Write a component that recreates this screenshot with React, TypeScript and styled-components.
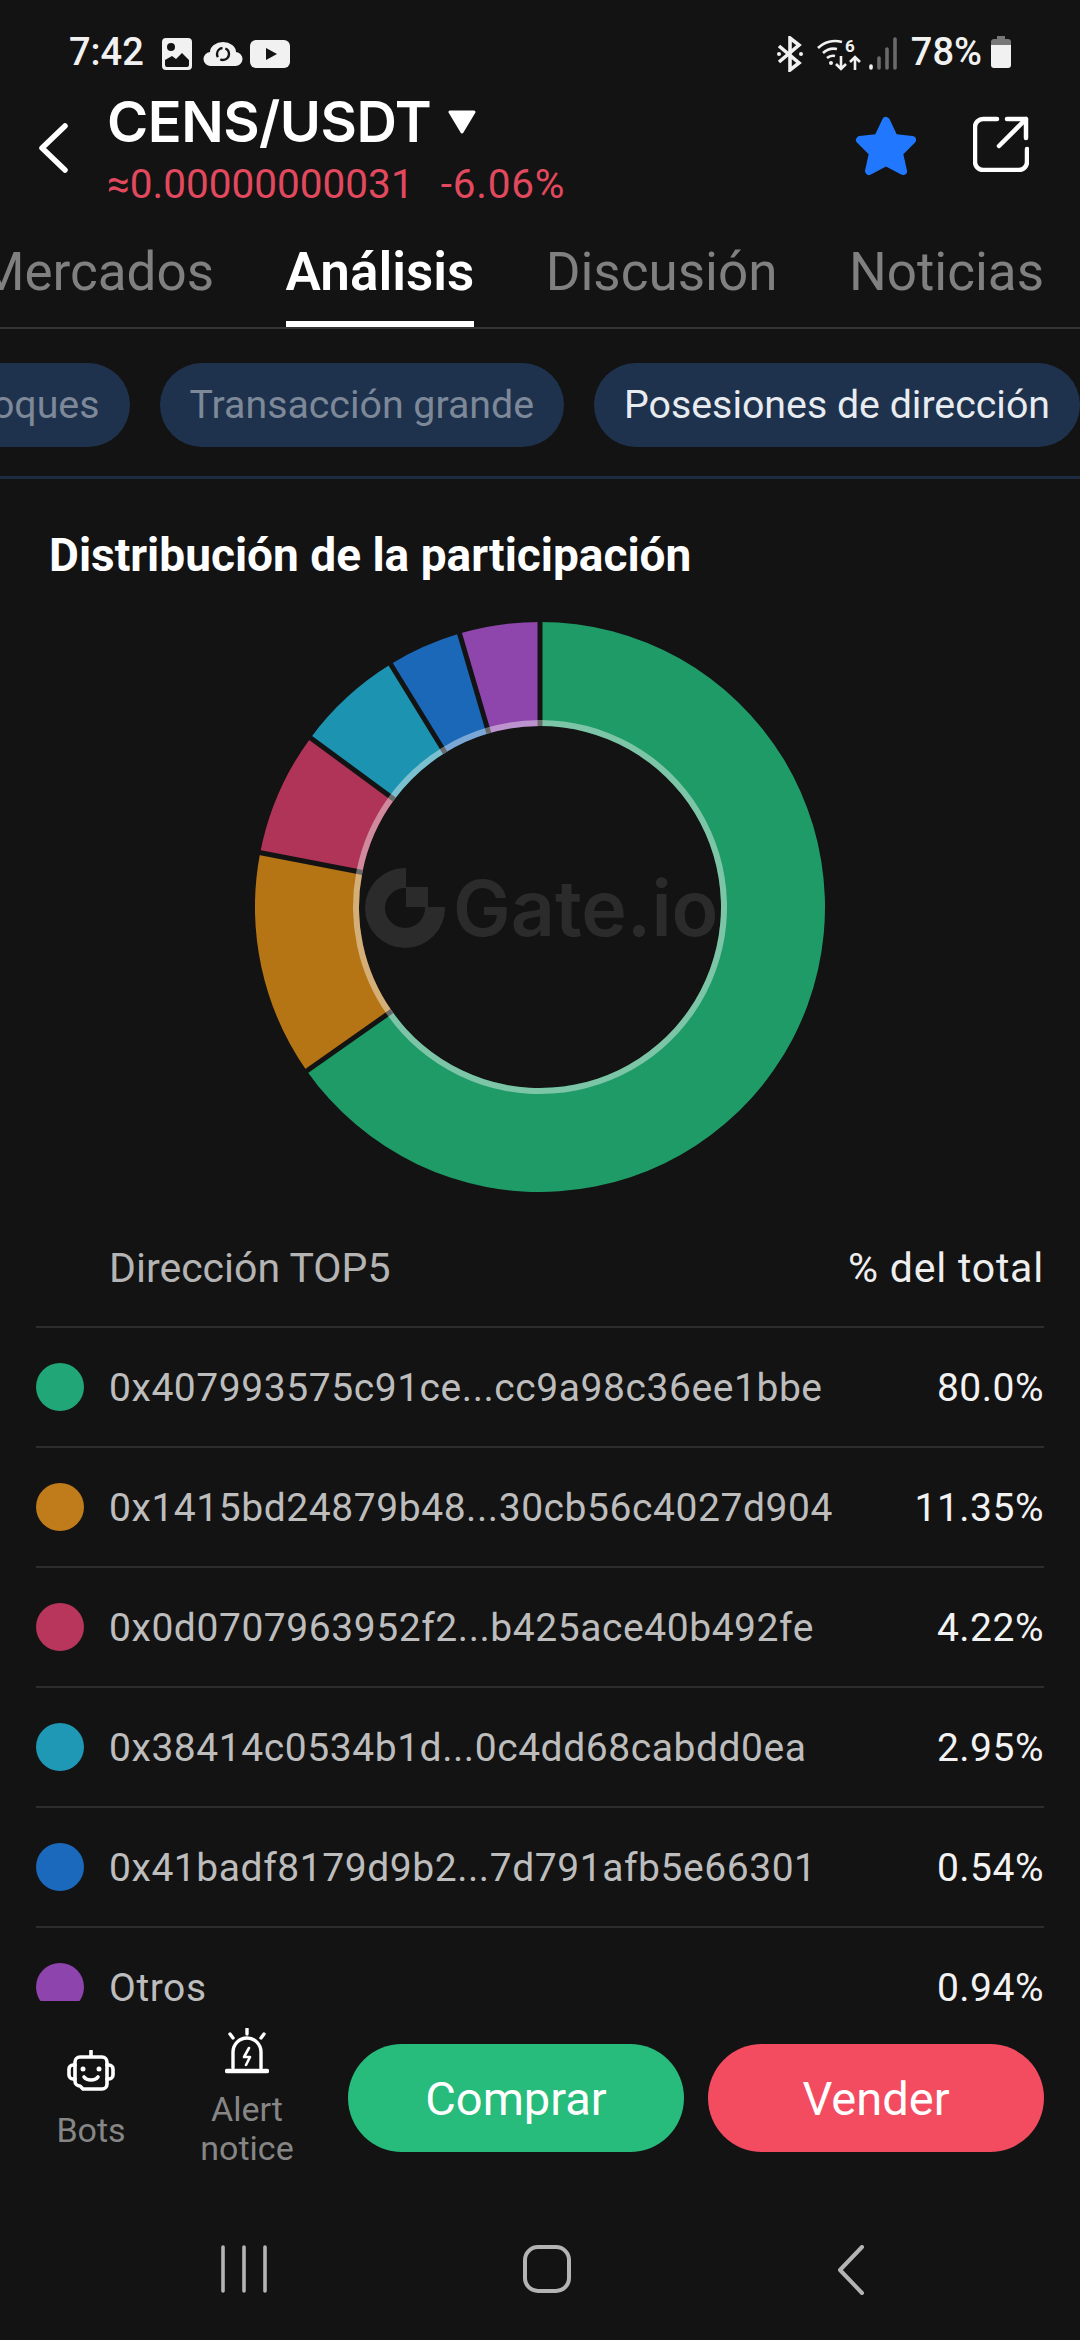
import React from "react";
import styled, { createGlobalStyle } from "styled-components";

const BG = "#131313";

const GlobalStyle = createGlobalStyle`
  * { box-sizing: border-box; }
  html, body { margin: 0; padding: 0; background: ${BG}; }
  body { font-family: Roboto, "Noto Sans", sans-serif; }
`;

const Screen = styled.div`
  width: 1080px;
  height: 2340px;
  background: ${BG};
  display: flex;
  flex-direction: column;
  overflow: hidden;
  color: #fff;
`;

const StatusBar = styled.div`
  height: 90px;
  flex: none;
  padding: 34px 68px 0 69px;
  display: flex;
  justify-content: space-between;
  align-items: flex-start;
`;

const StatusGroup = styled.div`
  display: flex;
  align-items: center;
  height: 36px;
`;

const StatusText = styled.span`
  font-size: 38px;
  line-height: 36px;
  font-weight: 500;
  color: #f1f1f1;
`;

const LeftIcons = styled.svg`
  margin: 4px 0 0 17px;
`;

const RightIcons = styled.svg`
  margin: 4px 14px 0 0;
`;

const BatteryIcon = styled.svg`
  margin-left: 8px;
`;

const Header = styled.div`
  height: 136px;
  flex: none;
  display: flex;
  align-items: flex-start;
  padding: 0 51px 0 38px;
`;

const BackButton = styled.div`
  width: 69px;
  padding-top: 33px;
  flex: none;
`;

const TitleBlock = styled.div`
  flex: 1;
  display: flex;
  flex-direction: column;
`;

const TitleRow = styled.div`
  display: flex;
  align-items: center;
  gap: 17px;
  height: 64px;
`;

const Title = styled.span`
  font-family: Inter, sans-serif;
  font-size: 56px;
  line-height: 64px;
  font-weight: 600;
  letter-spacing: -0.5px;
`;

const PriceRow = styled.div`
  display: flex;
  gap: 27px;
  margin-top: 8px;
  font-size: 40.5px;
  line-height: 44px;
  color: #e2495e;
`;

const PriceChange = styled.span`
  letter-spacing: 0.8px;
`;

const HeaderActions = styled.div`
  display: flex;
  gap: 55px;
  padding-top: 26px;
`;

const Tabs = styled.div`
  height: 103px;
  flex: none;
  display: flex;
  justify-content: flex-end;
  gap: 71.5px;
  padding-right: 36px;
  border-bottom: 2px solid #333;
  overflow: hidden;
`;

const Tab = styled.div<{ $active?: boolean }>`
  flex: none;
  height: 101px;
  padding-top: 16px;
  font-size: 53px;
  line-height: 60px;
  font-weight: ${(p) => (p.$active ? 600 : 400)};
  color: ${(p) => (p.$active ? "#fff" : "#808080")};
  border-bottom: 6px solid ${(p) => (p.$active ? "#fff" : "transparent")};
`;

const Pills = styled.div`
  height: 150px;
  flex: none;
  display: flex;
  justify-content: flex-end;
  gap: 30px;
  padding: 34px 0 0 0;
  border-bottom: 3px solid #1d2b40;
  overflow: hidden;
`;

const Pill = styled.div<{ $active?: boolean }>`
  flex: none;
  height: 84px;
  padding: 0 30px;
  border-radius: 42px;
  background: #1f324d;
  font-size: 39.3px;
  line-height: 84px;
  color: ${(p) => (p.$active ? "#e8ebf0" : "#7d8898")};
`;

const Content = styled.div`
  flex: 1;
  min-height: 0;
  overflow: hidden;
`;

const SectionTitle = styled.h2`
  margin: 0;
  padding: 52px 0 0 49px;
  font-size: 46px;
  line-height: 48px;
  font-weight: 700;
`;

const Chart = styled.div`
  position: relative;
  width: 570px;
  height: 570px;
  margin: 43px auto 16px;
`;

const Watermark = styled.div`
  position: absolute;
  left: 110px;
  top: 246px;
  display: flex;
  align-items: center;
  gap: 8px;
  color: #2b2b2b;
  font-family: Inter, sans-serif;
  font-size: 77px;
  line-height: 80px;
  font-weight: 600;
`;

const TableHead = styled.div`
  height: 120px;
  margin: 0 36px;
  padding: 2px 0 0 73px;
  display: flex;
  justify-content: space-between;
  align-items: center;
  border-bottom: 2px solid #2d2d2d;
  font-size: 41px;
`;

const HeadLabel = styled.span<{ $right?: boolean }>`
  color: ${(p) => (p.$right ? "#eee" : "#b4b4b4")};
  letter-spacing: ${(p) => (p.$right ? "0.8px" : "0")};
`;

const Row = styled.div`
  height: 120px;
  margin: 0 36px;
  display: flex;
  align-items: center;
  border-bottom: 2px solid #2d2d2d;
  font-size: 39px;
`;

const Dot = styled.span<{ $color: string }>`
  width: 48px;
  height: 48px;
  flex: none;
  margin-right: 25px;
  border-radius: 50%;
  background: ${(p) => p.$color};
`;

const Address = styled.span`
  flex: 1;
  margin-top: 2px;
  color: #bdbdbd;
  letter-spacing: 0.56px;
`;

const Percent = styled.span`
  margin-top: 2px;
  color: #f2f2f2;
  letter-spacing: 0.5px;
`;

const Footer = styled.div`
  height: 214px;
  flex: none;
  display: flex;
  padding: 0 36px;
`;

const Tool = styled.div`
  width: 110px;
  height: 178px;
  display: flex;
  flex-direction: column;
  align-items: center;
  justify-content: flex-start;
  text-align: center;
  font-size: 34px;
  line-height: 39px;
  color: #868686;
`;

const BotTool = styled(Tool)`
  padding-top: 49px;
  gap: 17px;
`;

const AlertTool = styled(Tool)`
  margin-left: 46px;
  padding-top: 27px;
  gap: 16px;
`;

const Actions = styled.div`
  margin-left: 46px;
  flex: 1;
  display: flex;
  gap: 24px;
  padding-top: 43px;
`;

const TradeButton = styled.div<{ $color: string }>`
  flex: 1;
  height: 108px;
  border-radius: 54px;
  background: ${(p) => p.$color};
  display: flex;
  align-items: center;
  justify-content: center;
  font-size: 47px;
  color: #fff;
`;

const NavBar = styled.div`
  height: 125px;
  flex: none;
  display: flex;
  align-items: flex-start;
  padding: 30px 215px 0 220px;
  justify-content: space-between;
`;

const HomeIcon = styled.svg`
  margin-right: 12px;
`;

const slices = [
	{ color: "#1f9b68", from: 0, to: 234.9 },
	{ color: "#b67515", from: 234.9, to: 281 },
	{ color: "#b03458", from: 281, to: 306.4 },
	{ color: "#1c93b0", from: 306.4, to: 328.4 },
	{ color: "#1b68b8", from: 328.4, to: 343.6 },
	{ color: "#8e46ac", from: 343.6, to: 360 },
];

const holders = [
	{ color: "#21a678", address: "0x407993575c91ce...cc9a98c36ee1bbe", pct: "80.0%" },
	{ color: "#c07b1b", address: "0x1415bd24879b48...30cb56c4027d904", pct: "11.35%" },
	{ color: "#b8355c", address: "0x0d0707963952f2...b425ace40b492fe", pct: "4.22%" },
	{ color: "#1f98b5", address: "0x38414c0534b1d...0c4dd68cabdd0ea", pct: "2.95%" },
	{ color: "#1b69bd", address: "0x41badf8179d9b2...7d791afb5e66301", pct: "0.54%" },
	{ color: "#8e44ad", address: "Otros", pct: "0.94%" },
];

const C = 285;

function point(r: number, deg: number) {
	const a = (deg * Math.PI) / 180;
	return `${C + r * Math.sin(a)} ${C - r * Math.cos(a)}`;
}

function ringPath(outer: number, inner: number, from: number, to: number) {
	const large = to - from > 180 ? 1 : 0;
	return `M${point(outer, from)}A${outer} ${outer} 0 ${large} 1 ${point(outer, to)}L${point(inner, to)}A${inner} ${inner} 0 ${large} 0 ${point(inner, from)}Z`;
}

function Donut() {
	return (
		<svg width="570" height="570" viewBox="0 0 570 570">
			{slices.map((s) => (
				<g key={s.color}>
					<path d={ringPath(285, 181, s.from, s.to)} fill={s.color} />
					<path d={ringPath(187, 181, s.from, s.to)} fill="#fff" fillOpacity="0.42" />
				</g>
			))}
			{slices.map((s) => {
				const a = (s.from * Math.PI) / 180;
				const x = Math.sin(a);
				const y = -Math.cos(a);
				return (
					<g key={s.from}>
						<line x1={C + 181 * x} y1={C + 181 * y} x2={C + 187 * x} y2={C + 187 * y} stroke="#6a6a6a" strokeWidth="5" />
						<line x1={C + 187 * x} y1={C + 187 * y} x2={C + 290 * x} y2={C + 290 * y} stroke={BG} strokeWidth="5" />
					</g>
				);
			})}
		</svg>
	);
}

function GateMark() {
	return (
		<svg width="80" height="80" viewBox="0 0 80 80" fill="#2b2b2b">
			<path d="M41 0a40 40 0 1 0 39 39H60A20 20 0 1 1 41 20Z" />
			<rect x="41" y="19" width="22" height="20" />
		</svg>
	);
}

export default function App() {
	return (
		<Screen>
			<GlobalStyle />
			<StatusBar>
				<StatusGroup>
					<StatusText>7:42</StatusText>
					<LeftIcons width="130" height="36" viewBox="0 0 130 36">
						<path
							fillRule="evenodd"
							fill="#f1f1f1"
							d="M5 2h22a4 4 0 0 1 4 4v24a4 4 0 0 1-4 4H5a4 4 0 0 1-4-4V6a4 4 0 0 1 4-4ZM4 24v5a2 2 0 0 0 2 2h20a2 2 0 0 0 2-2v-5l-7-7-6 6-4-3Z"
						/>
						<circle cx="10" cy="11" r="4" fill={BG} />
						<path fill="#f1f1f1" d="M50 30a7 7 0 0 1-1-14a13 10 0 0 1 26 0a7 7 0 0 1-1 14Z" />
						<circle cx="62" cy="18" r="6" fill="none" stroke={BG} strokeWidth="2.4" strokeDasharray="12 3" />
						<path fill="#f1f1f1" d="M95 4h28a6 6 0 0 1 6 6v16a6 6 0 0 1-6 6H95a6 6 0 0 1-6-6V10a6 6 0 0 1 6-6Z" />
						<path fill={BG} d="M105 12l11 6-11 6Z" />
					</LeftIcons>
				</StatusGroup>
				<StatusGroup>
					<RightIcons width="121" height="36" viewBox="0 0 121 36" fill="none" stroke="#f1f1f1">
						<path strokeWidth="3.6" d="M3 10l20 17-9 7V2l9 7L3 26" />
						<circle cx="3" cy="18" r="2" fill="#f1f1f1" stroke="none" />
						<circle cx="25" cy="18" r="2" fill="#f1f1f1" stroke="none" />
						<path strokeWidth="2.6" d="M42 12a24 24 0 0 1 24-6M47 17a16 16 0 0 1 14-4M51 22a9 9 0 0 1 8-2" />
						<circle cx="55" cy="27" r="2" fill="#f1f1f1" stroke="none" />
						<text x="69" y="16" fill="#f1f1f1" stroke="none" fontSize="17" fontWeight="700" fontFamily="Roboto">6</text>
						<path strokeWidth="2.6" d="M65 20v13m-5-5 5 5 5-5M79 34V21m-5 5 5-5 5 5" />
						<path strokeWidth="3.6" strokeLinecap="round" stroke="#f1f1f1" d="M95 30v2" />
						<path strokeWidth="3.6" strokeLinecap="round" stroke="#6a6a6a" d="M103 22v10M111 13v19M119 3v29" />
					</RightIcons>
					<StatusText>78%</StatusText>
					<BatteryIcon width="22" height="32" viewBox="0 0 22 32">
						<path fill="#777" d="M7 0h8v3h3a3 3 0 0 1 3 3v5H1V6a3 3 0 0 1 3-3h3Z" />
						<path fill="#f1f1f1" d="M1 9h20v20a3 3 0 0 1-3 3H4a3 3 0 0 1-3-3Z" />
					</BatteryIcon>
				</StatusGroup>
			</StatusBar>
			<Header>
				<BackButton>
					<svg width="30" height="50" viewBox="0 0 30 50" fill="none" stroke="#fff" strokeWidth="5.5" strokeLinecap="round" strokeLinejoin="round">
						<path d="M27 3 4 25l23 22" />
					</svg>
				</BackButton>
				<TitleBlock>
					<TitleRow>
						<Title>CENS/USDT</Title>
						<svg width="28" height="24" viewBox="0 0 28 24">
							<path d="M2 2h24L14 22Z" fill="#fff" stroke="#fff" strokeWidth="3" strokeLinejoin="round" />
						</svg>
					</TitleRow>
					<PriceRow>
						<span>≈0.00000000031</span>
						<PriceChange>-6.06%</PriceChange>
					</PriceRow>
				</TitleBlock>
				<HeaderActions>
					<svg width="64" height="60" viewBox="0 0 64 60">
						<path
							d="M32 5l8 17 18 2-13 13 4 18-17-9-17 9 4-18L6 24l18-2Z"
							fill="#2178ff"
							stroke="#2178ff"
							strokeWidth="8"
							strokeLinejoin="round"
						/>
					</svg>
					<svg width="56" height="56" viewBox="0 0 56 56" fill="none" stroke="#fff" strokeWidth="4.5" strokeLinecap="round" strokeLinejoin="round">
						<path d="M24 3H10a8 8 0 0 0-8 8v35a8 8 0 0 0 8 8h36a8 8 0 0 0 8-8V33" />
						<path d="M26 30 53 3M34 3h19v19" />
					</svg>
				</HeaderActions>
			</Header>
			<Tabs>
				<Tab>Mercados</Tab>
				<Tab $active>Análisis</Tab>
				<Tab>Discusión</Tab>
				<Tab>Noticias</Tab>
			</Tabs>
			<Pills>
				<Pill>Bloques</Pill>
				<Pill>Transacción grande</Pill>
				<Pill $active>Posesiones de dirección</Pill>
			</Pills>
			<Content>
				<SectionTitle>Distribución de la participación</SectionTitle>
				<Chart>
					<Donut />
					<Watermark>
						<GateMark />
						<span>Gate.io</span>
					</Watermark>
				</Chart>
				<TableHead>
					<HeadLabel>Dirección TOP5</HeadLabel>
					<HeadLabel $right>% del total</HeadLabel>
				</TableHead>
				{holders.map((h) => (
					<Row key={h.address}>
						<Dot $color={h.color} />
						<Address>{h.address}</Address>
						<Percent>{h.pct}</Percent>
					</Row>
				))}
			</Content>
			<Footer>
				<BotTool>
					<svg width="48" height="44" viewBox="0 0 48 44" fill="none" stroke="#fff" strokeWidth="3.6" strokeLinejoin="round" strokeLinecap="round">
						<path d="M24 1v6M13 7h22a5 5 0 0 1 5 5v22a5 5 0 0 1-5 5H16l-3-3a5 5 0 0 1-5-5V12a5 5 0 0 1 5-5Z" />
						<path d="M8 15H6a4 4 0 0 0-4 4v6a4 4 0 0 0 4 4h2M40 15h2a4 4 0 0 1 4 4v6a4 4 0 0 1-4 4h-2" />
						<path d="M17 27c3 4 11 4 14 0" />
						<circle cx="16" cy="19" r="2.5" fill="#fff" stroke="none" />
						<circle cx="32" cy="19" r="2.5" fill="#fff" stroke="none" />
					</svg>
					<span>Bots</span>
				</BotTool>
				<AlertTool>
					<svg width="44" height="46" viewBox="0 0 44 46" fill="none" stroke="#fff" strokeWidth="3.4" strokeLinecap="round" strokeLinejoin="round">
						<path d="M22 1v5M5 6l3 4M39 6l-3 4" />
						<path d="M8 40V24a14 14 0 0 1 28 0v16" />
						<path d="M2 43h40" strokeWidth="4.5" />
						<path d="M24 20l-5 9h6l-4 8" strokeWidth="2.6" />
					</svg>
					<span>Alert notice</span>
				</AlertTool>
				<Actions>
					<TradeButton $color="#27bb7c">Comprar</TradeButton>
					<TradeButton $color="#f34c61">Vender</TradeButton>
				</Actions>
			</Footer>
			<NavBar>
				<svg width="48" height="48" viewBox="0 0 48 48" fill="none" stroke="#b4b4b4" strokeWidth="3.6" strokeLinecap="round">
					<path d="M3 2v44M24 2v44M45 2v44" />
				</svg>
				<HomeIcon width="48" height="48" viewBox="0 0 48 48" fill="none" stroke="#b4b4b4" strokeWidth="4">
					<rect x="2" y="2" width="44" height="44" rx="13" />
				</HomeIcon>
				<svg width="28" height="50" viewBox="0 0 28 50" fill="none" stroke="#b4b4b4" strokeWidth="4" strokeLinecap="round" strokeLinejoin="round">
					<path d="M25 2 3 25l22 23" />
				</svg>
			</NavBar>
		</Screen>
	);
}
